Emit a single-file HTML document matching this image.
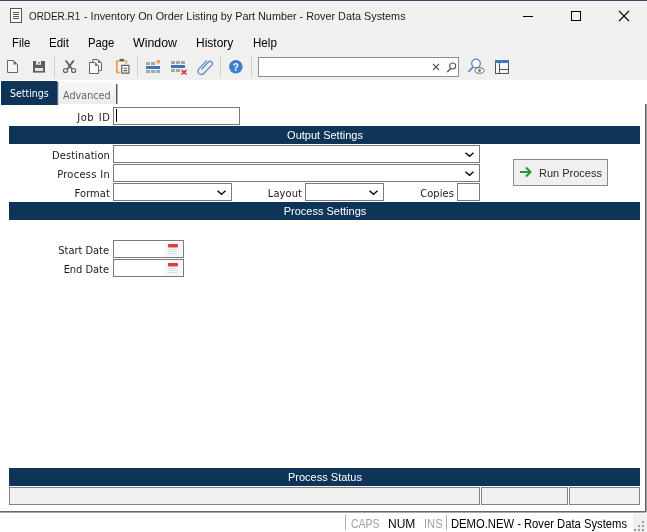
<!DOCTYPE html>
<html><head><meta charset="utf-8"><title>ORDER.R1</title>
<style>
*{box-sizing:border-box;margin:0;padding:0}
html,body{width:647px;height:532px;overflow:hidden;background:#fff}
body{position:relative;will-change:transform;font-family:"Liberation Sans",sans-serif;font-size:12px;color:#000}
.abs{position:absolute}
.chrome{left:0;top:0;width:647px;height:80px;background:#f0f0f0}
.topline{left:0;top:0;width:647px;height:1px;background:#3c4a5e}
.t{position:absolute;white-space:nowrap;transform-origin:0 0;line-height:1}
.menu{top:37px;font-size:12px;color:#000}
.lbl{position:absolute;white-space:nowrap;font-family:"DejaVu Sans Condensed","DejaVu Sans",sans-serif;font-size:11px;line-height:13px;color:#1a1a1a;text-align:right;letter-spacing:.1px;word-spacing:2px}
.bar{position:absolute;left:9px;width:631px;height:18px;background:#0e3558;color:#fff;font-size:11px;text-align:center;line-height:18px;padding-left:1px}
.inp{position:absolute;background:#fff;border:1px solid #7a7a7a;height:18px}
.sep{position:absolute;top:56px;width:1px;height:22px;background:#d0d0d0}
.pbox{position:absolute;top:487px;height:18px;background:#f0f0f0;border:1px solid #828282}
svg{position:absolute;overflow:visible}
</style></head><body>
<div class="abs chrome"></div>
<div class="abs topline"></div>

<!-- title icon -->
<svg style="left:10px;top:8px" width="13" height="16" viewBox="0 0 13 16"><rect x="0.5" y="0.5" width="11" height="14" fill="#fff" stroke="#555"/><path d="M3 4.5h6M3 6.5h6M3 8.5h6M3 10.5h6" stroke="#555" stroke-width="1"/></svg>
<div class="t" id="title" style="left:29px;top:10.600px;font-size:11px;color:#1c1c1c;transform:scaleX(.9)">ORDER.R1</div>
<div class="t" style="left:84px;top:10.600px;font-size:11px;color:#1c1c1c;transform:scaleX(.985)">- Inventory On Order Listing by Part Number - Rover Data Systems</div>
<!-- window buttons -->
<svg style="left:527px;top:10px" width="110" height="12" viewBox="0 0 110 12"><path d="M-4 6.5h10" stroke="#000"/><rect x="44.5" y="1.5" width="9" height="9" fill="none" stroke="#000"/><path d="M92 1l10 10M102 1l-10 10" stroke="#000" stroke-width="1.1"/></svg>

<!-- menu -->
<div class="t menu" style="left:12px;transform:scaleX(.94)">File</div>
<div class="t menu" style="left:49px;transform:scaleX(.96)">Edit</div>
<div class="t menu" style="left:88px;transform:scaleX(.94)">Page</div>
<div class="t menu" style="left:133px;transform:scaleX(1.03)">Window</div>
<div class="t menu" style="left:196px;transform:scaleX(1.0)">History</div>
<div class="t menu" style="left:253px;transform:scaleX(.965)">Help</div>

<!-- toolbar icons -->
<svg style="left:0;top:56px" width="520" height="22" viewBox="0 0 520 22">
 <!-- new -->
 <path d="M7.500 4.500h6l4 4v8h-10z" fill="#f5f5f5" stroke="#666" stroke-linejoin="miter"/><path d="M13.500 4.500v4h4z" fill="#707070"/>
 <!-- save -->
 <rect x="33" y="5" width="12" height="11.600" fill="#5e5e5e"/><rect x="36" y="5" width="5" height="3.800" fill="#e6e6e6"/><rect x="38.200" y="6" width="1.400" height="1.600" fill="#5e5e5e"/><rect x="35" y="12" width="8" height="3" fill="#ececec"/><path d="M36.500 13.500h5" stroke="#d0d0d0" stroke-width=".8"/>
 <!-- cut -->
 <path d="M64.600 4.600L67 4.600L72.600 12.800L71.200 13.400z" fill="#5e5e5e"/><path d="M74.800 4.600L72.400 4.600L66.800 12.800L68.200 13.400z" fill="#5e5e5e"/><circle cx="65.500" cy="14.500" r="2" fill="none" stroke="#5e5e5e" stroke-width="1.200"/><circle cx="73.600" cy="14.500" r="2" fill="none" stroke="#5e5e5e" stroke-width="1.200"/>
 <!-- copy -->
 <path d="M92.800 3.500h5.200l3.500 3.500v7.500h-8.700z" fill="#f4f4f4" stroke="#666"/><path d="M98 3.500v3.500h3.500z" fill="#777"/><path d="M89.500 6.500h5.500l3.500 3.500v7.500h-9z" fill="#f8f8f8" stroke="#666"/><path d="M95 6.500v3.500h3.500z" fill="#777"/>
 <!-- paste -->
 <path d="M119.200 5h-2.400v11.400h2.800" fill="none" stroke="#ee9a45" stroke-width="1.700"/><path d="M124.500 5h1.900v2.800" fill="none" stroke="#ee9a45" stroke-width="1.400"/><rect x="119.400" y="2.800" width="4.800" height="2.800" rx="1.200" fill="#666"/><rect x="121.700" y="9.400" width="7.200" height="7.700" fill="#f8f8f8" stroke="#5e5e5e" stroke-width="1.200"/><path d="M123.500 12.300h3.600M123.500 14.600h3.600" stroke="#5e5e5e" stroke-width="1.100"/>
 <!-- grid add -->
 <g fill="#a6a6a6"><rect x="146" y="6" width="4" height="3"/><rect x="151" y="6" width="4" height="3"/><rect x="146" y="14" width="4" height="3"/><rect x="151" y="14" width="4" height="3"/><rect x="156" y="14" width="4" height="3"/></g><rect x="146" y="10" width="14" height="3" fill="#3b78b8"/><rect x="156.500" y="4" width="3.500" height="3.500" rx="1" fill="#f0a050"/>
 <!-- grid del -->
 <g fill="#a6a6a6"><rect x="171" y="5" width="4" height="3"/><rect x="176" y="5" width="4" height="3"/><rect x="181" y="5" width="4" height="3"/><rect x="171" y="13" width="4" height="3"/><rect x="176" y="13" width="4" height="3"/></g><rect x="171" y="9" width="14" height="3" fill="#3b74b8"/><path d="M181.500 14l5 4.500M186.500 14l-5 4.500" stroke="#d32535" stroke-width="1.600"/>
 <!-- clip -->
 <path transform="translate(1,-1)" d="M200.500 14.500l7-7.500a2.200 2.200 0 0 1 3.200 3.200l-8 8.300a3.300 3.300 0 0 1-4.800-4.600l8-8.400" fill="none" stroke="#5585c5" stroke-width="1.150"/>
 <!-- help -->
 <circle cx="235.800" cy="10.700" r="6.800" fill="#3d7fca"/><text x="235.800" y="14.500" font-size="10" font-weight="bold" fill="#fff" text-anchor="middle" font-family="Liberation Sans, sans-serif">?</text>
 <!-- search -->
 <rect x="258.500" y="1.500" width="200" height="19" fill="#fff" stroke="#8e8e8e"/>
 <path d="M433 8l6 6M439 8l-6 6" stroke="#555" stroke-width="1.100"/>
 <circle cx="452.700" cy="10" r="3" fill="none" stroke="#555" stroke-width="1.100"/><path d="M450.700 12.500l-3.500 3.500" stroke="#555" stroke-width="1.300"/>
 <!-- find eye -->
 <circle cx="476" cy="7.500" r="4.300" fill="#fbfbfb" stroke="#4a80c0" stroke-width="1.200"/><path d="M473 11l-4.500 4.800" fill="none" stroke="#4a80c0" stroke-width="1.600"/><ellipse cx="479.500" cy="14.500" rx="4.400" ry="2.800" fill="#fbfbfb" stroke="#5c5c5c" stroke-width="1"/><circle cx="479.500" cy="14.500" r="1.300" fill="#5c5c5c"/>
 <!-- layout -->
 <rect x="495.500" y="4.500" width="13" height="13" fill="#f6f6f6" stroke="#555"/><rect x="495" y="4" width="14" height="3" fill="#3d78c0"/><path d="M499.500 7v10M500 13.500h8" stroke="#555" fill="none"/>
</svg>
<div class="sep" style="left:54px"></div>
<div class="sep" style="left:137px"></div>
<div class="sep" style="left:220px"></div>
<div class="sep" style="left:251px"></div>

<!-- tabs -->
<div class="abs" style="left:1px;top:81px;width:56px;height:24px;background:#0e3558;border-radius:1px 0 0 0"></div><div class="abs" style="left:57px;top:82px;width:1px;height:23px;background:#566779"></div><div class="abs" style="left:58px;top:82px;width:1px;height:23px;background:#c9cfd6"></div>
<div class="t" style="left:9.700px;top:88px;font-family:'DejaVu Sans Condensed',sans-serif;font-size:11px;color:#fff;transform:scaleX(.955)">Settings</div>
<div class="abs" style="left:59px;top:82px;width:57px;height:22px;background:linear-gradient(#f8f8f8,#ececec)"></div>
<div class="abs" style="left:116px;top:84px;width:1px;height:20px;background:#5a5a5a"></div><div class="abs" style="left:117px;top:84px;width:1px;height:20px;background:#b0b0b0"></div>
<div class="t" style="left:63px;top:90px;font-family:'DejaVu Sans Condensed',sans-serif;font-size:11px;color:#666;transform:scaleX(.975)">Advanced</div>

<!-- right/bottom panel border -->
<div class="abs" style="left:645px;top:104px;width:1px;height:408px;background:#5f5f5f"></div><div class="abs" style="left:646px;top:104px;width:1px;height:408px;background:#a0a0a0"></div>
<div class="abs" style="left:0;top:511px;width:646px;height:1px;background:#6a6a6a"></div><div class="abs" style="left:0;top:512px;width:646px;height:1px;background:#a8a8a8"></div>

<!-- form -->
<div class="lbl" style="left:0;width:110.500px;top:111px;letter-spacing:.6px;word-spacing:.8px">Job ID</div>
<div class="inp" style="left:113px;top:107px;width:127px"></div>
<div class="abs" style="left:116px;top:109px;width:1px;height:13px;background:#000"></div>

<div class="bar" style="top:126px">Output Settings</div>

<div class="lbl" style="left:0;width:110px;top:149px">Destination</div>
<div class="inp" style="left:113px;top:145px;width:367px"></div>
<div class="lbl" style="left:0;width:110px;top:168px;letter-spacing:.3px;word-spacing:0">Process In</div>
<div class="inp" style="left:113px;top:164px;width:367px"></div>
<div class="lbl" style="left:0;width:110px;top:187px">Format</div>
<div class="inp" style="left:113px;top:183px;width:119px"></div>
<div class="lbl" style="left:200px;width:102px;top:187px">Layout</div>
<div class="inp" style="left:305px;top:183px;width:79px"></div>
<div class="lbl" style="left:350px;width:104px;top:187px">Copies</div>
<div class="inp" style="left:457px;top:183px;width:23px"></div>
<svg style="left:0;top:145px" width="500" height="60" viewBox="0 0 500 60">
 <g fill="none" stroke="#000" stroke-width="1.300"><path d="M465.500 7.800l4 3.500l4-3.500"/><path d="M465.500 26.800l4 3.500l4-3.500"/><path d="M217.500 45.800l4 3.500l4-3.500"/><path d="M369.500 45.800l4 3.500l4-3.500"/></g>
</svg>

<!-- run button -->
<div class="abs" style="left:513px;top:159px;width:95px;height:27px;background:#f0f0f0;border:1px solid #8a8a8a"></div>
<svg style="left:519px;top:166px" width="14" height="12" viewBox="0 0 14 12"><path d="M1 6h10M7 1.500l4.500 4.500l-4.500 4.500" fill="none" stroke="#1d9a2c" stroke-width="2"/></svg>
<div class="t" style="left:539px;top:167px;font-size:11px;color:#2a2a2a;line-height:12px">Run Process</div>

<div class="bar" style="top:202px">Process Settings</div>

<div class="lbl" style="left:0;width:109px;top:244px;word-spacing:0;letter-spacing:-.03px">Start Date</div>
<div class="inp" style="left:113px;top:240px;width:71px"></div>
<div class="lbl" style="left:0;width:109px;top:263px;word-spacing:0;letter-spacing:-.03px">End Date</div>
<div class="inp" style="left:113px;top:259px;width:71px"></div>
<svg style="left:163px;top:241px" width="20" height="36" viewBox="0 0 20 36">
 <g id="cal"><rect x="1" y="1" width="18" height="15" fill="#f4f6f7"/><rect x="5" y="3" width="10" height="3.500" rx="1" fill="#dc3b3f"/><path d="M5 8.500h9M5 10.500h9M5 12.500h9" stroke="#d5dee5"/></g>
 <g transform="translate(0,19)"><rect x="1" y="1" width="18" height="15" fill="#f4f6f7"/><rect x="5" y="3" width="10" height="3.500" rx="1" fill="#dc3b3f"/><path d="M5 8.500h9M5 10.500h9M5 12.500h9" stroke="#d5dee5"/></g>
</svg>

<div class="bar" style="top:468px">Process Status</div>
<div class="pbox" style="left:9px;width:471px"></div>
<div class="pbox" style="left:481px;width:87px"></div>
<div class="pbox" style="left:569px;width:71px"></div>

<!-- status bar -->
<div class="abs" style="left:345px;top:515px;width:1px;height:15px;background:#b0b0b0"></div>
<div class="abs" style="left:446px;top:515px;width:1px;height:15px;background:#b0b0b0"></div>
<div class="t" style="left:351px;top:517.500px;font-size:12px;color:#a0a0a0;transform:scaleX(.87)">CAPS</div>
<div class="t" style="left:388px;top:517.500px;font-size:12px;color:#000;transform:scaleX(1.0)">NUM</div>
<div class="t" style="left:424px;top:517.500px;font-size:12px;color:#a0a0a0;transform:scaleX(.93)">INS</div>
<div class="t" style="left:451px;top:517.500px;font-size:12px;color:#000;transform:scaleX(.936)">DEMO.NEW - Rover Data Systems</div>
<div class="abs" style="left:633px;top:514px;width:14px;height:18px;background:#f0f0f0"></div>
<svg style="left:634px;top:519px" width="12" height="12" viewBox="0 0 12 12"><g fill="#9a9a9a"><rect x="8" y="2" width="2" height="2"/><rect x="8" y="6" width="2" height="2"/><rect x="4" y="6" width="2" height="2"/><rect x="8" y="10" width="2" height="2"/><rect x="4" y="10" width="2" height="2"/><rect x="0" y="10" width="2" height="2"/></g></svg>
</body></html>
